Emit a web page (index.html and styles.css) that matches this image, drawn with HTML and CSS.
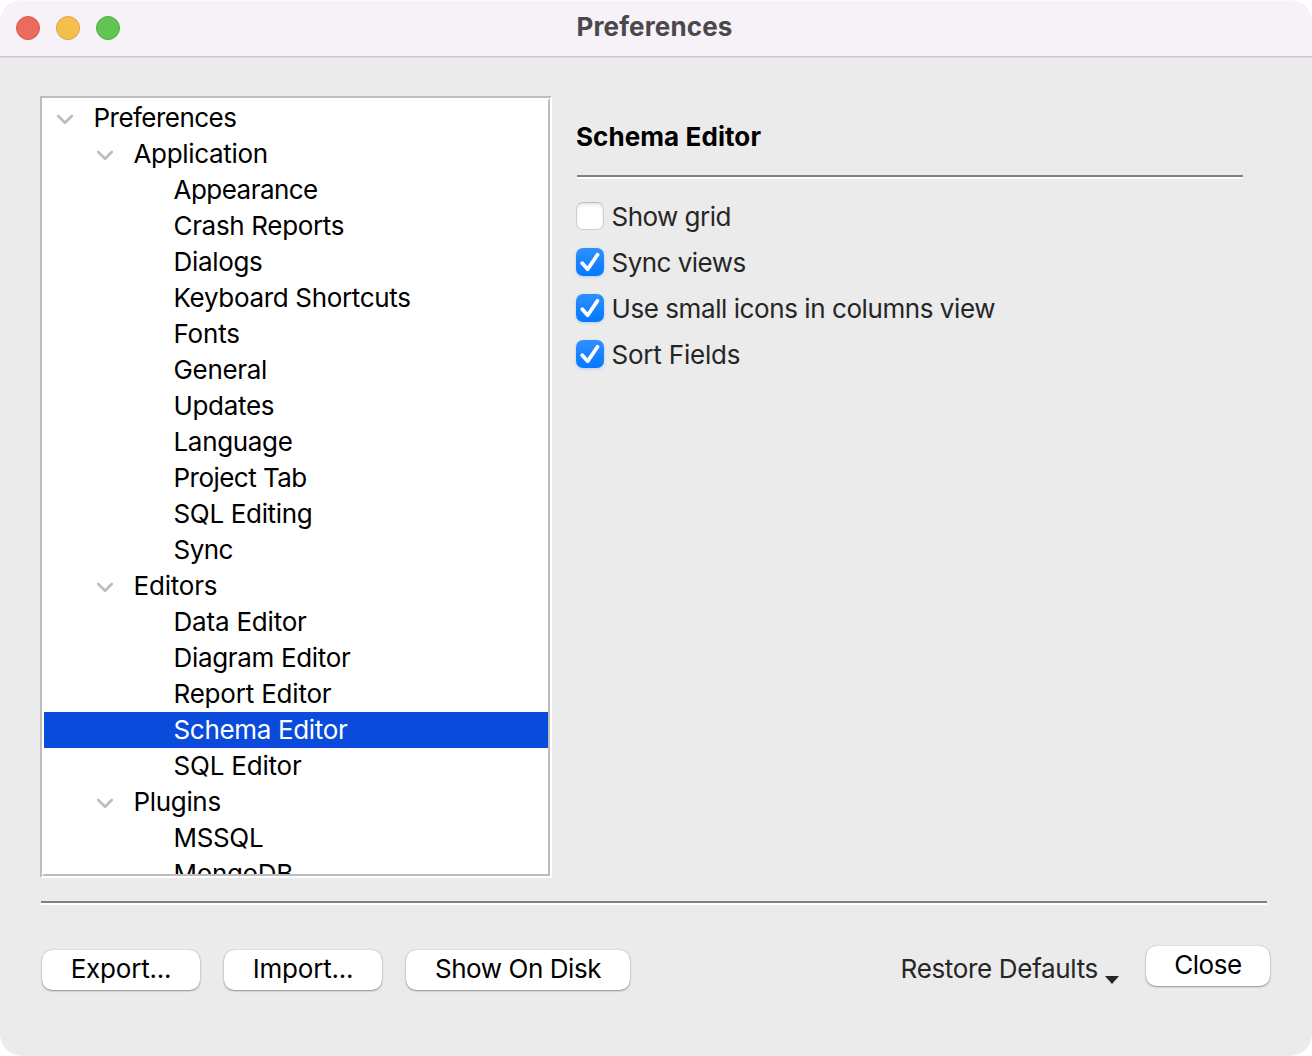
FILE: index.html
```html
<!DOCTYPE html>
<html lang="en">
<head>
<meta charset="utf-8">
<title>Preferences</title>
<link rel="stylesheet" href="styles.css">
</head>
<body>
<svg class="defs" width="0" height="0">
  <symbol id="chevron" viewBox="0 0 18 12"><path d="M2.2 3 9 9.7 15.8 3" fill="none" stroke="#bdbdbd" stroke-width="2.6" stroke-linecap="round" stroke-linejoin="round"/></symbol>
  <symbol id="check" viewBox="0 0 28 28"><path d="M6.3 15.2 11.7 21.2 21.5 6.8" fill="none" stroke="#fff" stroke-width="3.8" stroke-linecap="round" stroke-linejoin="round"/></symbol>
</svg>
<div class="window">
  <header class="titlebar">
    <div class="lights"><span class="light red"></span><span class="light yellow"></span><span class="light green"></span></div>
    <h1 class="window-title">Preferences</h1>
  </header>
  <main class="content">
    <nav class="tree">
      <ul class="tree-list">
        <li class="row level-0 tight"><svg class="chevron"><use href="#chevron"/></svg><span>Preferences</span></li>
        <li class="row level-1"><svg class="chevron"><use href="#chevron"/></svg><span>Application</span></li>
        <li class="row level-2 tight"><span>Appearance</span></li>
        <li class="row level-2"><span>Crash Reports</span></li>
        <li class="row level-2"><span>Dialogs</span></li>
        <li class="row level-2"><span>Keyboard Shortcuts</span></li>
        <li class="row level-2 loose"><span>Fonts</span></li>
        <li class="row level-2"><span>General</span></li>
        <li class="row level-2"><span>Updates</span></li>
        <li class="row level-2"><span>Language</span></li>
        <li class="row level-2 tight"><span>Project Tab</span></li>
        <li class="row level-2"><span>SQL Editing</span></li>
        <li class="row level-2 tight"><span>Sync</span></li>
        <li class="row level-1 loose"><svg class="chevron"><use href="#chevron"/></svg><span>Editors</span></li>
        <li class="row level-2 loose"><span>Data Editor</span></li>
        <li class="row level-2"><span>Diagram Editor</span></li>
        <li class="row level-2 loose"><span>Report Editor</span></li>
        <li class="row level-2 selected"><span>Schema Editor</span></li>
        <li class="row level-2 loose"><span>SQL Editor</span></li>
        <li class="row level-1"><svg class="chevron"><use href="#chevron"/></svg><span>Plugins</span></li>
        <li class="row level-2"><span>MSSQL</span></li>
        <li class="row level-2"><span>MongoDB</span></li>
      </ul>
    </nav>
    <section class="panel">
      <h2 class="panel-title">Schema Editor</h2>
      <div class="rule"></div>
      <div class="options">
        <div class="option tight"><span class="box"></span><span>Show grid</span></div>
        <div class="option tight"><span class="box checked"><svg class="check"><use href="#check"/></svg></span><span>Sync views</span></div>
        <div class="option medium"><span class="box checked"><svg class="check"><use href="#check"/></svg></span><span>Use small icons in columns view</span></div>
        <div class="option loose"><span class="box checked"><svg class="check"><use href="#check"/></svg></span><span>Sort Fields</span></div>
      </div>
    </section>
  </main>
  <div class="rule footer-rule"></div>
  <footer class="footer">
    <button class="button export loose">Export...</button>
    <button class="button import loose">Import...</button>
    <button class="button disk medium">Show On Disk</button>
    <div class="restore"><span>Restore Defaults</span><svg class="caret" viewBox="0 0 14 8"><path d="M0 0H14L7 8Z" fill="#262626"/></svg></div>
    <button class="button close medium">Close</button>
  </footer>
</div>
</body>
</html>
```
FILE: styles.css
```css
* { box-sizing: border-box; }
body {
  margin: 0;
  background: #fff;
  color: #000;
  font: 26px/36px Inter, "Liberation Sans", sans-serif;
  letter-spacing: -0.33px;
}
h1, h2, ul { margin: 0; padding: 0; }
.defs { display: block; }
.window {
  width: 1312px;
  height: 1056px;
  display: flex;
  flex-direction: column;
  background: #ebebeb;
  border-radius: 22px;
  overflow: hidden;
}
.titlebar {
  height: 58px;
  flex: none;
  display: grid;
  grid-template-columns: 1fr auto 1fr;
  align-items: center;
  padding: 0 16px 2px;
  background: #f7f2f8;
  border-top: 1px solid #fbf9fc;
  border-bottom: 1px solid #dcdadc;
  box-shadow: inset 0 -1px #c7c5c8;
}
.lights { display: flex; gap: 16px; }
.light { width: 24px; height: 24px; border-radius: 50%; border: 1px solid; }
.red { background: #ed6a5e; border-color: #d8574c; }
.yellow { background: #f5bf4f; border-color: #d9a33e; }
.green { background: #61c554; border-color: #50aa42; }
.window-title {
  font-size: 26px;
  font-weight: 700;
  line-height: 36px;
  letter-spacing: 0.15px;
  padding: 0 3px 2px 0;
  color: #4b484c;
}
.content {
  display: flex;
  gap: 24px;
  padding: 38px 69px 0 40px;
}
.tree {
  width: 512px;
  height: 782px;
  flex: none;
  border: 2px solid;
  border-color: #bdbdbd #fff #fff #bdbdbd;
  background: #fff;
}
.tree-list {
  height: 778px;
  border: 2px solid;
  border-color: #fff #bdbdbd #bdbdbd #fff;
  list-style: none;
  overflow: hidden;
}
.row {
  height: 36px;
  display: flex;
  align-items: center;
  white-space: nowrap;
}
.level-0 { padding-left: 12px; }
.level-1 { padding-left: 52px; }
.level-2 { padding-left: 129.5px; }
.tight { letter-spacing: -0.53px; }
.medium { letter-spacing: -0.43px; }
.loose { letter-spacing: -0.2px; }
.selected { background: #0a4bdc; color: #fff; }
.chevron { width: 18px; height: 12px; margin: 1px 19.5px 0 0; }
.panel { flex: 1; padding-top: 23px; }
.panel-title {
  font-size: 26px;
  font-weight: 700;
  line-height: 36px;
  letter-spacing: 0.08px;
}
.rule { height: 4px; background: #fff; border-top: 2px solid #808080; }
.panel .rule { margin: 20px 0 0 1px; }
.options { margin-top: 15px; color: #262626; }
.option {
  height: 46px;
  display: flex;
  align-items: center;
  gap: 7.5px;
}
.box {
  width: 28px;
  height: 28px;
  margin-bottom: 2px;
  border-radius: 7px;
  background: #fff;
  border: 1px solid #cfcfcf;
  border-top-color: #bebebe;
  box-shadow: inset 0 2px 3px #0000001a;
}
.checked {
  border: 0;
  background: linear-gradient(#2e90ff, #0478ff);
  box-shadow: 0 1px 3px #007aff40;
}
.check { display: block; width: 28px; height: 28px; }
.footer-rule { margin: 23px 45px 0 41px; }
.footer {
  display: flex;
  align-items: flex-start;
  padding: 45px 42px 0;
}
.button {
  height: 40px;
  padding: 0 0 2px;
  border: 0;
  border-radius: 10px;
  background: #fff;
  color: #000;
  font-family: inherit;
  font-size: 26px;
  line-height: 38px;
  box-shadow: 0 0 1px #00000059, 0 1px 2px #00000059;
}
.export, .import { width: 158px; margin-right: 24px; }
.disk { width: 224px; }
.close { width: 124px; margin: -4px 0 0 27px; }
.restore {
  margin-left: auto;
  display: flex;
  align-items: flex-start;
  gap: 7px;
  line-height: 38px;
  color: #262626;
  white-space: nowrap;
}
.caret { width: 14px; height: 8px; margin-top: 26px; }
```
